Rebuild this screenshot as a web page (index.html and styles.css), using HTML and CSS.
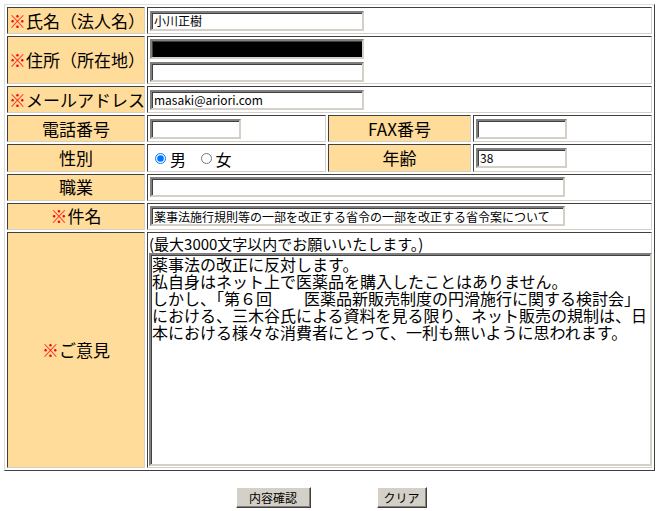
FILE: index.html
```html
<!DOCTYPE html>
<html lang="ja">
<head>
    <meta charset="UTF-8">
    <title>ご意見募集フォーム</title>
    <link rel="stylesheet" href="styles.css">
</head>
<body>
<form class="opinion-form">
    <table class="form-table">
        <colgroup>
            <col class="col-label">
            <col class="col-value">
            <col class="col-label2">
            <col class="col-value">
        </colgroup>
        <tr class="row-std">
            <th class="label left"><span class="req">※</span>氏名（法人名）</th>
            <td class="value" colspan="3"><input type="text" class="field w-mid" value="小川正樹"></td>
        </tr>
        <tr class="row-addr">
            <th class="label left"><span class="req">※</span>住所（所在地）</th>
            <td class="value" colspan="3">
                <input type="text" class="field w-mid redacted" value="">
                <input type="text" class="field w-mid second" value="">
            </td>
        </tr>
        <tr class="row-std">
            <th class="label left"><span class="req">※</span>メールアドレス</th>
            <td class="value" colspan="3"><input type="text" class="field w-mid" value="masaki@ariori.com"></td>
        </tr>
        <tr class="row-std">
            <th class="label">電話番号</th>
            <td class="value"><input type="text" class="field w-short" value=""></td>
            <th class="label">FAX番号</th>
            <td class="value"><input type="text" class="field w-short" value=""></td>
        </tr>
        <tr class="row-std">
            <th class="label">性別</th>
            <td class="value">
                <label class="radio"><input type="radio" name="sex" checked>男</label>
                <label class="radio"><input type="radio" name="sex">女</label>
            </td>
            <th class="label">年齢</th>
            <td class="value"><input type="text" class="field w-short" value="38"></td>
        </tr>
        <tr class="row-std">
            <th class="label">職業</th>
            <td class="value" colspan="3"><input type="text" class="field w-long" value=""></td>
        </tr>
        <tr class="row-std">
            <th class="label"><span class="req">※</span>件名</th>
            <td class="value" colspan="3"><input type="text" class="field w-long" value="薬事法施行規則等の一部を改正する省令の一部を改正する省令案について"></td>
        </tr>
        <tr class="row-opinion">
            <th class="label"><span class="req">※</span>ご意見</th>
            <td class="value top" colspan="3">
                <div class="note">(最大3000文字以内でお願いいたします。)</div>
<textarea class="opinion" wrap="off">薬事法の改正に反対します。
私自身はネット上で医薬品を購入したことはありません。
しかし、「第６回　　医薬品新販売制度の円滑施行に関する検討会」
における、三木谷氏による資料を見る限り、ネット販売の規制は、日
本における様々な消費者にとって、一利も無いように思われます。</textarea>
            </td>
        </tr>
    </table>
    <div class="actions">
        <button type="button" class="btn btn-confirm">内容確認</button>
        <button type="reset" class="btn btn-clear">クリア</button>
    </div>
</form>
</body>
</html>
```

FILE: styles.css
```css
body {
    margin: 4px;
    background-color: #ffffff;
    color: #000000;
    font-family: "Noto Sans CJK JP", "Liberation Sans", sans-serif;
}
.form-table {
    width: 651px;
    table-layout: fixed;
    border-collapse: separate;
    border-spacing: 2px;
    border: 1px solid;
    border-color: #dcdcdc #404040 #404040 #dcdcdc;
}
.col-label {
    width: 138px;
}
.col-value {
    width: 179px;
}
.col-label2 {
    width: 143px;
}
.form-table th,
.form-table td {
    border: 1px solid;
    border-color: #404040 #d4d0c8 #d4d0c8 #404040;
    padding: 0 2px;
    vertical-align: middle;
}
.row-std {
    height: 27px;
}
.row-addr {
    height: 48px;
}
.row-opinion {
    height: 236px;
}
.label {
    background-color: #ffdc9a;
    font-size: 17px;
    font-weight: normal;
    text-align: center;
    white-space: nowrap;
    line-height: 20px;
}
.label.left {
    text-align: left;
    padding-left: 1px;
}
.req {
    color: #ff0000;
}
.value {
    background-color: #ffffff;
}
.value.top {
    vertical-align: top;
    padding: 2px 1px 0 1px;
}
.field {
    display: block;
    box-sizing: border-box;
    height: 20px;
    margin: 0;
    padding: 0 2px;
    border: 2px solid;
    border-color: #808080 #d4d0c8 #d4d0c8 #808080;
    box-shadow: inset 1px 1px 0 #404040;
    background-color: #ffffff;
    font-family: "Noto Sans CJK JP", "Liberation Sans", sans-serif;
    font-size: 12px;
    color: #000000;
    outline: none;
}
.w-mid {
    width: 214px;
}
.w-short {
    width: 91px;
}
.w-long {
    width: 415px;
}
.redacted {
    background-color: #000000;
}
.second {
    margin-top: 3px;
}
.radio {
    display: inline-flex;
    align-items: center;
    font-size: 16px;
    margin-left: 5px;
    margin-right: 6px;
}
.radio input {
    width: 11px;
    height: 11px;
    margin: 0 4px 0 0;
}
.note {
    font-size: 15px;
    line-height: 18px;
    white-space: nowrap;
}
.opinion {
    display: block;
    box-sizing: border-box;
    width: 503px;
    height: 213px;
    margin: 0;
    padding: 1px 2px 1px 1px;
    border: 2px solid;
    border-color: #808080 #d4d0c8 #d4d0c8 #808080;
    box-shadow: inset 1px 1px 0 #404040;
    font-family: "Noto Sans CJK JP", sans-serif;
    font-size: 16px;
    line-height: 17px;
    resize: none;
    overflow: hidden;
    white-space: pre;
}
.actions {
    display: flex;
    justify-content: center;
    gap: 66px;
    margin-top: 16px;
}
.btn {
    height: 21px;
    padding: 0;
    background-color: #d4d0c8;
    border: 1px solid;
    border-color: #ffffff #404040 #404040 #ffffff;
    box-shadow: inset -1px -1px 0 #808080;
    font-family: "Noto Sans CJK JP", sans-serif;
    font-size: 12px;
    line-height: 17px;
    color: #000000;
    white-space: nowrap;
}
.btn-confirm {
    width: 75px;
}
.btn-clear {
    width: 50px;
}
```
